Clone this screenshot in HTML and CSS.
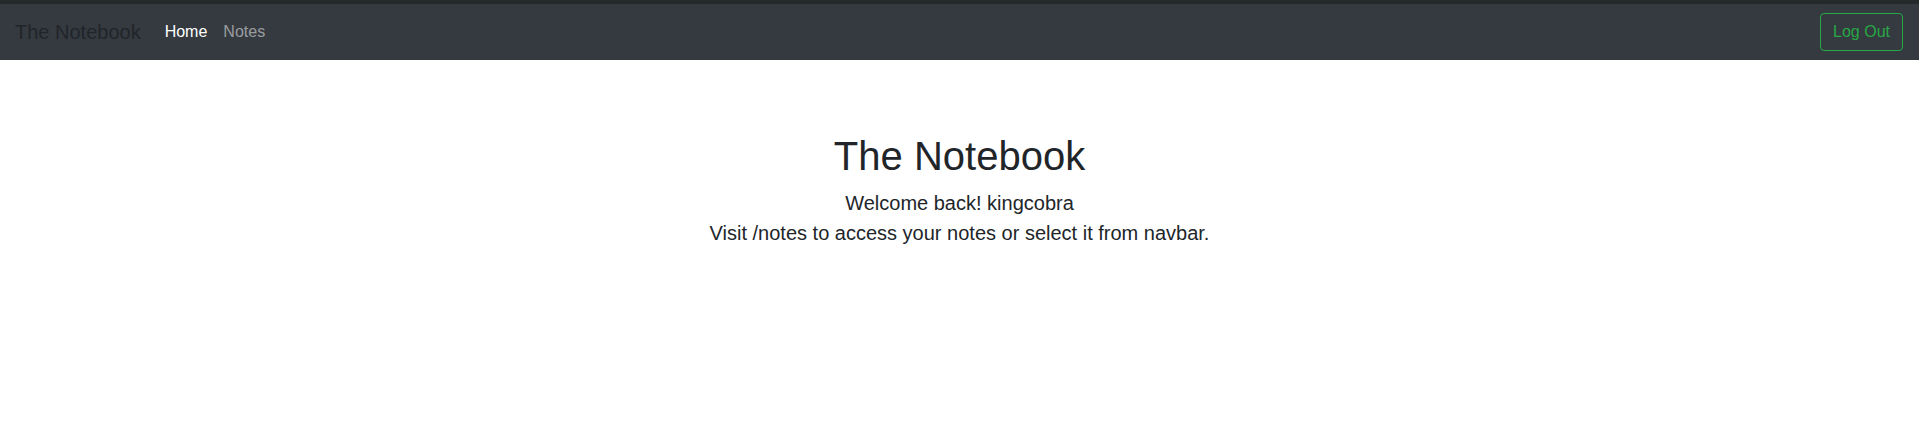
FILE: index.html
```html
<!DOCTYPE html>
<html lang="en">
<head>
<meta charset="utf-8">
<title>The Notebook</title>
<link rel="stylesheet" href="styles.css">
</head>
<body>
<div class="topstrip"></div>
<nav class="navbar">
  <div class="nav-left">
    <a class="brand" href="#">The Notebook</a>
    <ul class="nav-links">
      <li><a class="nav-link active" href="#">Home</a></li>
      <li><a class="nav-link" href="#">Notes</a></li>
    </ul>
  </div>
  <button class="btn-logout" type="button">Log Out</button>
</nav>
<main class="hero">
  <h1 class="title">The Notebook</h1>
  <p class="lead">Welcome back! kingcobra<br>Visit /notes to access your notes or select it from navbar.</p>
</main>
</body>
</html>
```

FILE: styles.css
```css
* { box-sizing: border-box; }
html, body { margin: 0; padding: 0; }
body {
  font-family: "Liberation Sans", Arial, sans-serif;
  font-size: 16px;
  line-height: 1.5;
  color: #212529;
  background: #fff;
}
.topstrip {
  height: 4px;
  background: #26292c;
}
.navbar {
  display: flex;
  align-items: center;
  justify-content: space-between;
  height: 56px;
  padding: 8px 16px 8px 15px;
  background: #343a40;
}
.nav-left {
  display: flex;
  align-items: center;
}
.brand {
  font-size: 20px;
  line-height: 30px;
  padding: 5px 0;
  margin-right: 16px;
  color: #212529;
  text-decoration: none;
}
.nav-links {
  display: flex;
  list-style: none;
  margin: 0;
  padding: 0;
}
.nav-link {
  display: block;
  padding: 8px 8px;
  color: rgba(255, 255, 255, 0.5);
  text-decoration: none;
}
.nav-link.active { color: #fff; }
.btn-logout {
  font-family: inherit;
  font-size: 16px;
  line-height: 24px;
  padding: 6px 12px;
  color: #28a745;
  background: transparent;
  border: 1px solid #28a745;
  border-radius: 4px;
}
.hero {
  text-align: center;
  padding-top: 72px;
}
.title {
  font-size: 40px;
  font-weight: 400;
  line-height: 1.2;
  margin: 0 0 8px;
}
.lead {
  font-size: 20px;
  line-height: 30px;
  margin: 0;
}
```
